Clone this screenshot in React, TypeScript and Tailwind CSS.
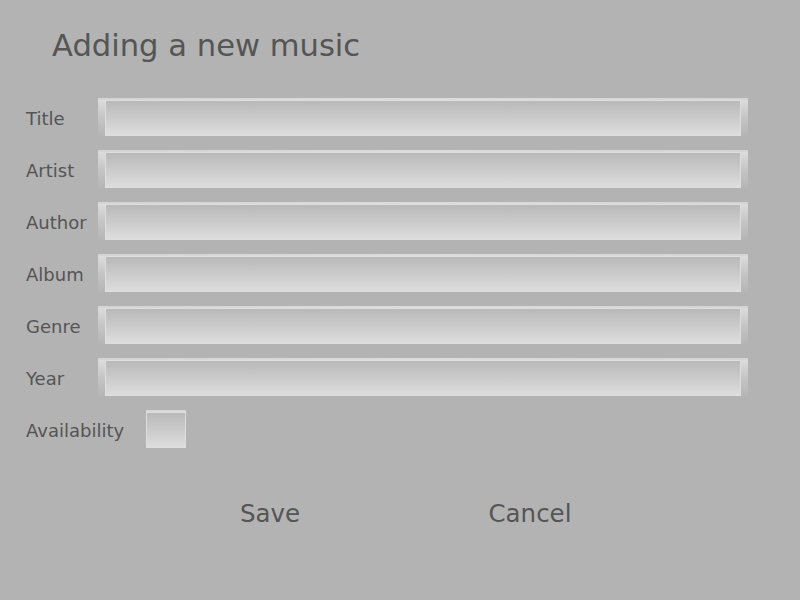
const fields = ['Title', 'Artist', 'Author', 'Album', 'Genre', 'Year']

function Field() {
  return (
    <div className="flex h-[39px] w-[650px] flex-col">
      <div className="h-[2px] bg-gradient-to-r from-[#d4d4d4] via-[#dcdcdc] to-[#d4d4d4]" />
      <div className="flex flex-1">
        <div className="w-[7px] bg-gradient-to-b from-[#dcdcdc] via-[#c4c4c4] to-[#b4b4b4]" />
        <div className="mb-[1px] flex-1 border border-[#dedede] bg-gradient-to-b from-[#b9b9b9] to-[#dddddd]" />
        <div className="w-[7px] bg-gradient-to-b from-[#dcdcdc] via-[#c4c4c4] to-[#b4b4b4]" />
      </div>
    </div>
  )
}

export default function App() {
  return (
    <div
      className="flex h-[600px] w-[800px] flex-col bg-[#b3b3b3] text-[#555555]"
      style={{ fontFamily: '"DejaVu Sans", sans-serif' }}
    >
      <h1 className="pl-[52px] pt-[27px] text-[30.6px] leading-[37px]">Adding a new music</h1>

      <div className="mt-[34px] flex flex-col gap-[13px]">
        {fields.map(f => (
          <div key={f} className="flex items-center">
            <span className="w-[98px] pl-[26px] pt-[2px] text-[18px] leading-[22px]">{f}</span>
            <Field />
          </div>
        ))}
        <div className="flex items-center">
          <span className="pl-[26px] pt-[3px] text-[18px] leading-[22px]">Availability</span>
          <div className="ml-[22px] flex h-[38px] w-[40px] flex-col">
            <div className="h-[2px] bg-[#d8d8d8]" />
            <div className="flex-1 border border-[#dedede] bg-gradient-to-b from-[#b9b9b9] to-[#dddddd]" />
          </div>
        </div>
      </div>

      <div className="mt-[51px] flex justify-center">
        <button className="w-[260px] text-[24.5px] leading-[30px]">Save</button>
        <button className="w-[260px] text-[24.5px] leading-[30px]">Cancel</button>
      </div>
    </div>
  )
}
